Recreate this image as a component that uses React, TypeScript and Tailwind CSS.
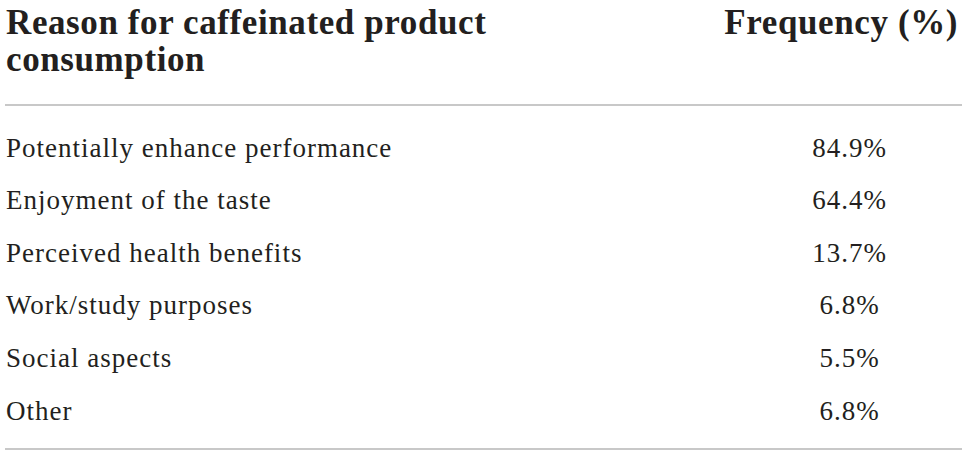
export default function App() {
  const rows: [string, string][] = [
    ["Potentially enhance performance", "84.9%"],
    ["Enjoyment of the taste", "64.4%"],
    ["Perceived health benefits", "13.7%"],
    ["Work/study purposes", "6.8%"],
    ["Social aspects", "5.5%"],
    ["Other", "6.8%"],
  ]

  return (
    <div className="w-[968px] h-[455px] bg-white text-[#231f20] font-['Liberation_Serif',serif]">
      <div className="mx-[5px] w-[957px]">
        {/* Header */}
        <div className="flex pt-[4px] pb-[26px] border-b-2 border-[#c8c8c8]">
          <div className="w-[732px] pl-[1px] text-[35px] leading-[37px] font-bold tracking-[0.6px]">
            Reason for caffeinated product
            <br />
            consumption
          </div>
          <div className="flex flex-1 min-w-0 justify-end pr-[4px] text-[35px] leading-[37px] font-bold tracking-[0.6px] whitespace-nowrap">
            <span>Frequency (%)</span>
          </div>
        </div>

        {/* Body */}
        <div className="pt-[15.6px] pb-[11px] border-b-2 border-[#c8c8c8]">
          {rows.map(([label, value]) => (
            <div key={label} className="flex h-[52.6px] items-center text-[27px] leading-[52.6px] tracking-[1px]">
              <div className="w-[732px] pl-[1px]">{label}</div>
              <div className="flex-1 text-center">{value}</div>
            </div>
          ))}
        </div>
      </div>
    </div>
  )
}
